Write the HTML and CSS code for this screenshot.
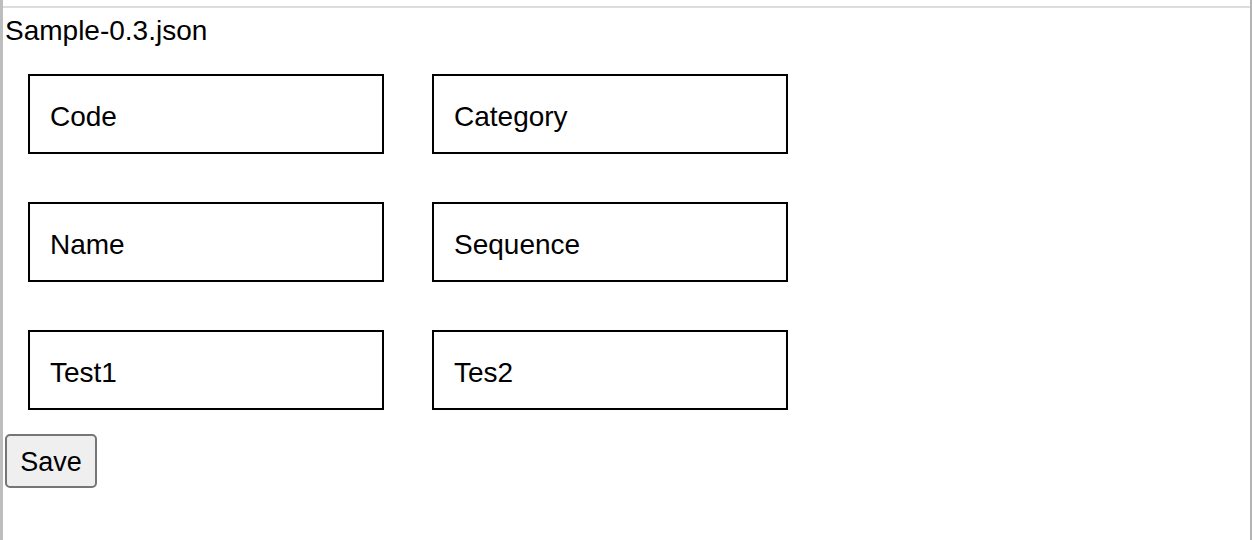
FILE: index.html
```html
<!DOCTYPE html>
<html>
<head>
<meta charset="utf-8">
<title>Sample</title>
<link rel="stylesheet" href="styles.css">
</head>
<body>
<div class="frame">
  <div class="topline"></div>
  <div class="title">Sample-0.3.json</div>
  <form class="fields">
    <input class="field" type="text" value="Code">
    <input class="field" type="text" value="Category">
    <input class="field" type="text" value="Name">
    <input class="field" type="text" value="Sequence">
    <input class="field" type="text" value="Test1">
    <input class="field" type="text" value="Tes2">
  </form>
  <button class="save" type="button">Save</button>
</div>
</body>
</html>
```

FILE: styles.css
```css
html, body {
  margin: 0;
  padding: 0;
  background: #ffffff;
}

.frame {
  box-sizing: border-box;
  width: 1252px;
  height: 540px;
  border-left: 3px solid #bdbdbd;
  border-right: 2px solid #b4b4b4;
  font-family: "Liberation Sans", Arial, sans-serif;
  color: #000;
  overflow: hidden;
}

.topline {
  margin-top: 6px;
  height: 2px;
  background: #dddddd;
}

.title {
  margin-top: 7px;
  margin-left: 2px;
  font-size: 28px;
  line-height: 32px;
}

.fields {
  display: grid;
  grid-template-columns: 356px 356px;
  column-gap: 48px;
  row-gap: 48px;
  margin: 27px 0 0 25px;
}

.field {
  box-sizing: border-box;
  width: 356px;
  height: 80px;
  margin: 0;
  border: 2px solid #000;
  border-radius: 0;
  padding: 6px 0 0 20px;
  font-family: "Liberation Sans", Arial, sans-serif;
  font-size: 28px;
  color: #000;
  background: #fff;
  outline: none;
}

.save {
  display: block;
  box-sizing: border-box;
  width: 92px;
  height: 54px;
  margin: 24px 0 0 2px;
  padding: 2px 0 0;
  border: 2px solid #767676;
  border-radius: 5px;
  background: #efefef;
  font-family: "Liberation Sans", Arial, sans-serif;
  font-size: 27px;
  color: #000;
}
```
